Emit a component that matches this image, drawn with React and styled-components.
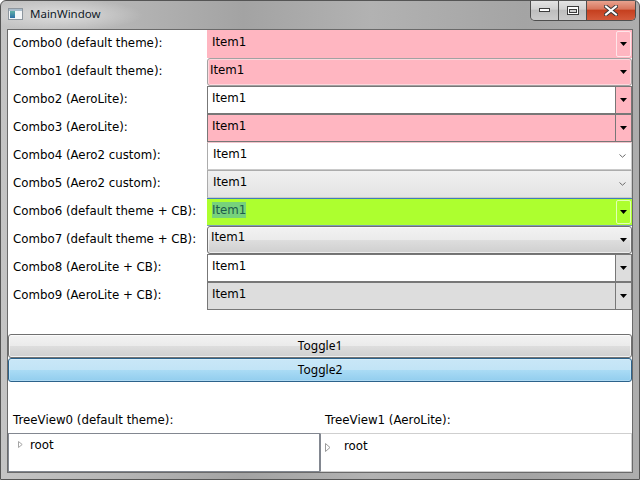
import React from 'react';
import styled, { createGlobalStyle, css } from 'styled-components';

const GlobalStyle = createGlobalStyle`
    html, body {
        margin: 0;
        padding: 0;
        background: #ffffff;
    }
    #root {
        width: 640px;
        height: 480px;
    }
`;

const UI_FONT = `"DejaVu Sans", "Liberation Sans", sans-serif`;
const BUTTON_FONT = `"Noto Sans", "Liberation Sans", sans-serif`;
const PINK = '#ffb6c1';

export const Window = styled.div`
    box-sizing: border-box;
    width: 640px;
    height: 480px;
    display: flex;
    flex-direction: column;
    border: 1px solid #555555;
    border-radius: 6px 6px 0 0;
    overflow: hidden;
    background:
        radial-gradient(ellipse 80px 16px at 62px 14px, rgba(255, 255, 255, 0.5), rgba(255, 255, 255, 0)),
        linear-gradient(90deg, #c4c4c4 0%, #b6b6b6 18%, #a3a3a3 38%, #b2b2b2 58%, #a4a4a4 82%, #adadad 100%);
`;

export const TitleBar = styled.div`
    height: 28px;
    display: flex;
    align-items: flex-start;
    padding: 0 3px 0 7px;
`;

export const AppIcon = styled.svg`
    margin-top: 7px;
    flex: none;
`;

export const TitleText = styled.div`
    margin-left: 7px;
    line-height: 26px;
    font-family: ${BUTTON_FONT};
    font-size: 11.5px;
    color: #101a28;
    flex: 1;
`;

export const CaptionGroup = styled.div`
    display: flex;
    margin-top: -1px;
    height: 20px;
    border: 1px solid #4e4e4e;
    border-top: none;
    border-radius: 0 0 5px 5px;
    overflow: hidden;
`;

export const CaptionButton = styled.div`
    width: ${p => p.$w}px;
    display: flex;
    align-items: center;
    justify-content: center;
    border-left: ${p => (p.$first ? 'none' : '1px solid #4e4e4e')};
    background: ${p => (p.$close
        ? 'linear-gradient(#eaa895 0%, #d8765d 45%, #c5401f 52%, #d45a3b 100%)'
        : 'linear-gradient(#e6e6e6 0%, #d2d2d2 45%, #bebebe 52%, #cbcbcb 100%)')};
`;

export const Frame = styled.div`
    flex: 1;
    display: flex;
    padding: 0 6px 6px 6px;
`;

export const Client = styled.div`
    flex: 1;
    display: flex;
    flex-direction: column;
    border: 1px solid #6a6a6a;
    background: #ffffff;
    font-family: ${UI_FONT};
    font-size: 11.8px;
    color: #000000;
`;

export const ComboGrid = styled.div`
    display: grid;
    grid-template-columns: 199px 1fr;
    grid-auto-rows: 28px;
`;

export const RowLabel = styled.div`
    padding: 0 0 2px 5px;
    display: flex;
    align-items: center;
    white-space: nowrap;
`;

const looks = {
    plain: css`
        border: none;
    `,
    rounded: css`
        border: 1px solid #a2a2a2;
        border-radius: 3px;
        box-shadow: inset 0 0 0 1px rgba(255, 255, 255, 0.45);
    `,
    lite: css`
        border: 1px solid #777777;
    `,
    aero2: css`
        border: 1px solid #cacaca;
        border-left-color: #acacac;
        border-top-color: ${p => p.$topLine || '#cacaca'};
    `,
    cb: css`
        border-top: 1px solid #3f7fb8;
        border-bottom: 1px solid #7d9cb8;
    `,
    button: css`
        border: 1px solid #707070;
        border-radius: 3px;
        box-shadow: inset 0 0 0 1px rgba(255, 255, 255, 0.6);
    `,
};

export const ComboBox = styled.div`
    box-sizing: border-box;
    height: 28px;
    display: flex;
    align-items: stretch;
    background: ${p => p.$bg};
    ${p => looks[p.$look]}
`;

export const ComboText = styled.div`
    flex: 1;
    align-self: flex-start;
    line-height: 14px;
    padding-top: ${p => p.$top}px;
    padding-left: ${p => p.$left}px;
`;

export const Selection = styled.span`
    background: #77d27b;
    color: #1d5b4c;
    padding: 1px 0;
`;

const buttons = {
    framed: css`
        width: 13px;
        margin: 1px 1px 1px 0;
        border: 1px solid rgba(255, 255, 255, 0.65);
        border-radius: 2px;
    `,
    plain: css`
        width: 16px;
    `,
    split: css`
        width: 15px;
        border-left: 1px solid #777777;
    `,
    chevron: css`
        width: 17px;
    `,
};

export const DropButton = styled.div`
    display: flex;
    align-items: center;
    justify-content: center;
    background: ${p => p.$bg || 'transparent'};
    ${p => buttons[p.$kind]}
`;

export const Toggles = styled.div`
    margin-top: 24px;
    display: flex;
    flex-direction: column;
`;

export const ToggleButton = styled.button`
    box-sizing: border-box;
    height: 24px;
    margin: 0;
    padding: 0 0 1px 0;
    border: 1px solid ${p => (p.$checked ? '#2c628b' : '#707070')};
    border-radius: 3px;
    font-family: ${BUTTON_FONT};
    font-size: 12px;
    color: #000000;
    box-shadow: inset 0 0 0 1px rgba(255, 255, 255, ${p => (p.$checked ? 0.25 : 0.7)});
    background: ${p => (p.$checked
        ? 'linear-gradient(#c9e7f7 0%, #c2e4f6 48%, #a9dbf5 52%, #92cdee 100%)'
        : 'linear-gradient(#f2f2f2 0%, #ebebeb 48%, #dddddd 52%, #cfcfcf 100%)')};
`;

export const TreeGrid = styled.div`
    margin-top: 25px;
    display: grid;
    grid-template-columns: 312px 1fr;
    grid-template-rows: 26px 39px;
`;

export const TreeLabel = styled.div`
    padding: 0 0 0 5px;
    display: flex;
    align-items: center;
    white-space: nowrap;
`;

export const TreeBox = styled.div`
    box-sizing: border-box;
    border: 1px solid ${p => (p.$lite ? '#cfcfcf' : '#828790')};
    border-left-color: #828790;
`;

export const TreeItem = styled.div`
    display: flex;
    align-items: flex-start;
    padding-left: ${p => p.$indent}px;
`;

export const Expander = styled.svg`
    margin-top: ${p => p.$top}px;
    margin-right: ${p => p.$gap}px;
    flex: none;
`;

export const ItemText = styled.div`
    line-height: 14px;
    padding-top: ${p => p.$top}px;
`;

const Arrow = () => (
    <svg width="7" height="4" viewBox="0 0 7 4">
        <path d="M0 0 L7 0 L3.5 4 Z" fill="#000000" />
    </svg>
);

const Chevron = () => (
    <svg width="7" height="4" viewBox="0 0 7 4">
        <path d="M0.5 0.5 L3.5 3.2 L6.5 0.5" fill="none" stroke="#6a6a6a" strokeWidth="1" />
    </svg>
);

const comboLayout = {
    plain: { left: 5, top: 5 },
    rounded: { left: 2, top: 4 },
    lite: { left: 4, top: 4 },
    aero2: { left: 5, top: 4 },
    cb: { left: 5, top: 4 },
    button: { left: 3, top: 3 },
};

const combos = [
    { label: 'Combo0 (default theme):', look: 'plain', bg: PINK, button: 'framed' },
    { label: 'Combo1 (default theme):', look: 'rounded', bg: PINK, button: 'plain' },
    { label: 'Combo2 (AeroLite):', look: 'lite', bg: '#ffffff', button: 'split', buttonBg: PINK },
    { label: 'Combo3 (AeroLite):', look: 'lite', bg: PINK, button: 'split', buttonBg: PINK },
    { label: 'Combo4 (Aero2 custom):', look: 'aero2', bg: '#ffffff', button: 'chevron', topLine: '#f2c4cb' },
    { label: 'Combo5 (Aero2 custom):', look: 'aero2', bg: 'linear-gradient(#f0f0f0, #e3e3e3)', button: 'chevron', topLine: '#acacac' },
    { label: 'Combo6 (default theme + CB):', look: 'cb', bg: '#adff2f', button: 'framed', selected: true },
    { label: 'Combo7 (default theme + CB):', look: 'button', bg: 'linear-gradient(#f2f2f2 0%, #ebebeb 48%, #dddddd 52%, #cfcfcf 100%)', button: 'plain' },
    { label: 'Combo8 (AeroLite + CB):', look: 'lite', bg: '#ffffff', button: 'split', buttonBg: '#dddddd' },
    { label: 'Combo9 (AeroLite + CB):', look: 'lite', bg: '#dddddd', button: 'split', buttonBg: '#dddddd' },
];

const App = () => {
    return (<>
        <GlobalStyle />
        <Window>
            <TitleBar>
                <AppIcon width="15" height="12" viewBox="0 0 15 12">
                    <defs>
                        <linearGradient id="pane" x1="0" y1="0" x2="0" y2="1">
                            <stop offset="0" stopColor="#5fb0a8" />
                            <stop offset="1" stopColor="#2d6fa6" />
                        </linearGradient>
                    </defs>
                    <rect x="0.5" y="0.5" width="14" height="11" fill="#f4f6f8" stroke="#8d969e" />
                    <rect x="1" y="1" width="13" height="2" fill="#a9bccb" />
                    <rect x="2" y="3" width="5" height="7" fill="url(#pane)" />
                </AppIcon>
                <TitleText>MainWindow</TitleText>
                <CaptionGroup>
                    <CaptionButton $w={27} $first>
                        <svg width="11" height="4" viewBox="0 0 11 4">
                            <rect x="0.5" y="0.5" width="10" height="3" fill="#ffffff" stroke="#3c3c3c" />
                        </svg>
                    </CaptionButton>
                    <CaptionButton $w={27}>
                        <svg width="12" height="9" viewBox="0 0 12 9">
                            <rect x="0.5" y="0.5" width="11" height="8" fill="#ffffff" stroke="#3c3c3c" />
                            <rect x="2.5" y="3.5" width="7" height="3" fill="#cfcfcf" stroke="#3c3c3c" />
                        </svg>
                    </CaptionButton>
                    <CaptionButton $w={48} $close>
                        <svg width="14" height="11" viewBox="0 0 14 11">
                            <path d="M2 1.5 L12 9.5 M12 1.5 L2 9.5" stroke="#3a3a3a" strokeWidth="4" strokeLinecap="square" />
                            <path d="M2 1.5 L12 9.5 M12 1.5 L2 9.5" stroke="#ffffff" strokeWidth="2" strokeLinecap="square" />
                        </svg>
                    </CaptionButton>
                </CaptionGroup>
            </TitleBar>
            <Frame>
                <Client>
                    <ComboGrid>
                        {combos.map(item => {
                            const pos = comboLayout[item.look];
                            return (<React.Fragment key={item.label}>
                                <RowLabel>{item.label}</RowLabel>
                                <ComboBox $look={item.look} $bg={item.bg} $topLine={item.topLine}>
                                    <ComboText $left={pos.left} $top={pos.top}>
                                        {item.selected ? <Selection>Item1</Selection> : 'Item1'}
                                    </ComboText>
                                    <DropButton $kind={item.button} $bg={item.buttonBg}>
                                        {item.button === 'chevron' ? <Chevron /> : <Arrow />}
                                    </DropButton>
                                </ComboBox>
                            </React.Fragment>);
                        })}
                    </ComboGrid>
                    <Toggles>
                        <ToggleButton>Toggle1</ToggleButton>
                        <ToggleButton $checked>Toggle2</ToggleButton>
                    </Toggles>
                    <TreeGrid>
                        <TreeLabel>TreeView0 (default theme):</TreeLabel>
                        <TreeLabel>TreeView1 (AeroLite):</TreeLabel>
                        <TreeBox>
                            <TreeItem $indent={9}>
                                <Expander $top={7} $gap={7} width="5" height="7" viewBox="0 0 5 7">
                                    <path d="M0.5 0.5 L4.2 3.5 L0.5 6.5 Z" fill="#ffffff" stroke="#a5a5a5" />
                                </Expander>
                                <ItemText $top={4}>root</ItemText>
                            </TreeItem>
                        </TreeBox>
                        <TreeBox $lite>
                            <TreeItem $indent={4}>
                                <Expander $top={9} $gap={13} width="6" height="9" viewBox="0 0 6 9">
                                    <path d="M0.5 0.5 L5 4.5 L0.5 8.5 Z" fill="#ffffff" stroke="#9a9a9a" />
                                </Expander>
                                <ItemText $top={5}>root</ItemText>
                            </TreeItem>
                        </TreeBox>
                    </TreeGrid>
                </Client>
            </Frame>
        </Window>
    </>);
};

export default App;
